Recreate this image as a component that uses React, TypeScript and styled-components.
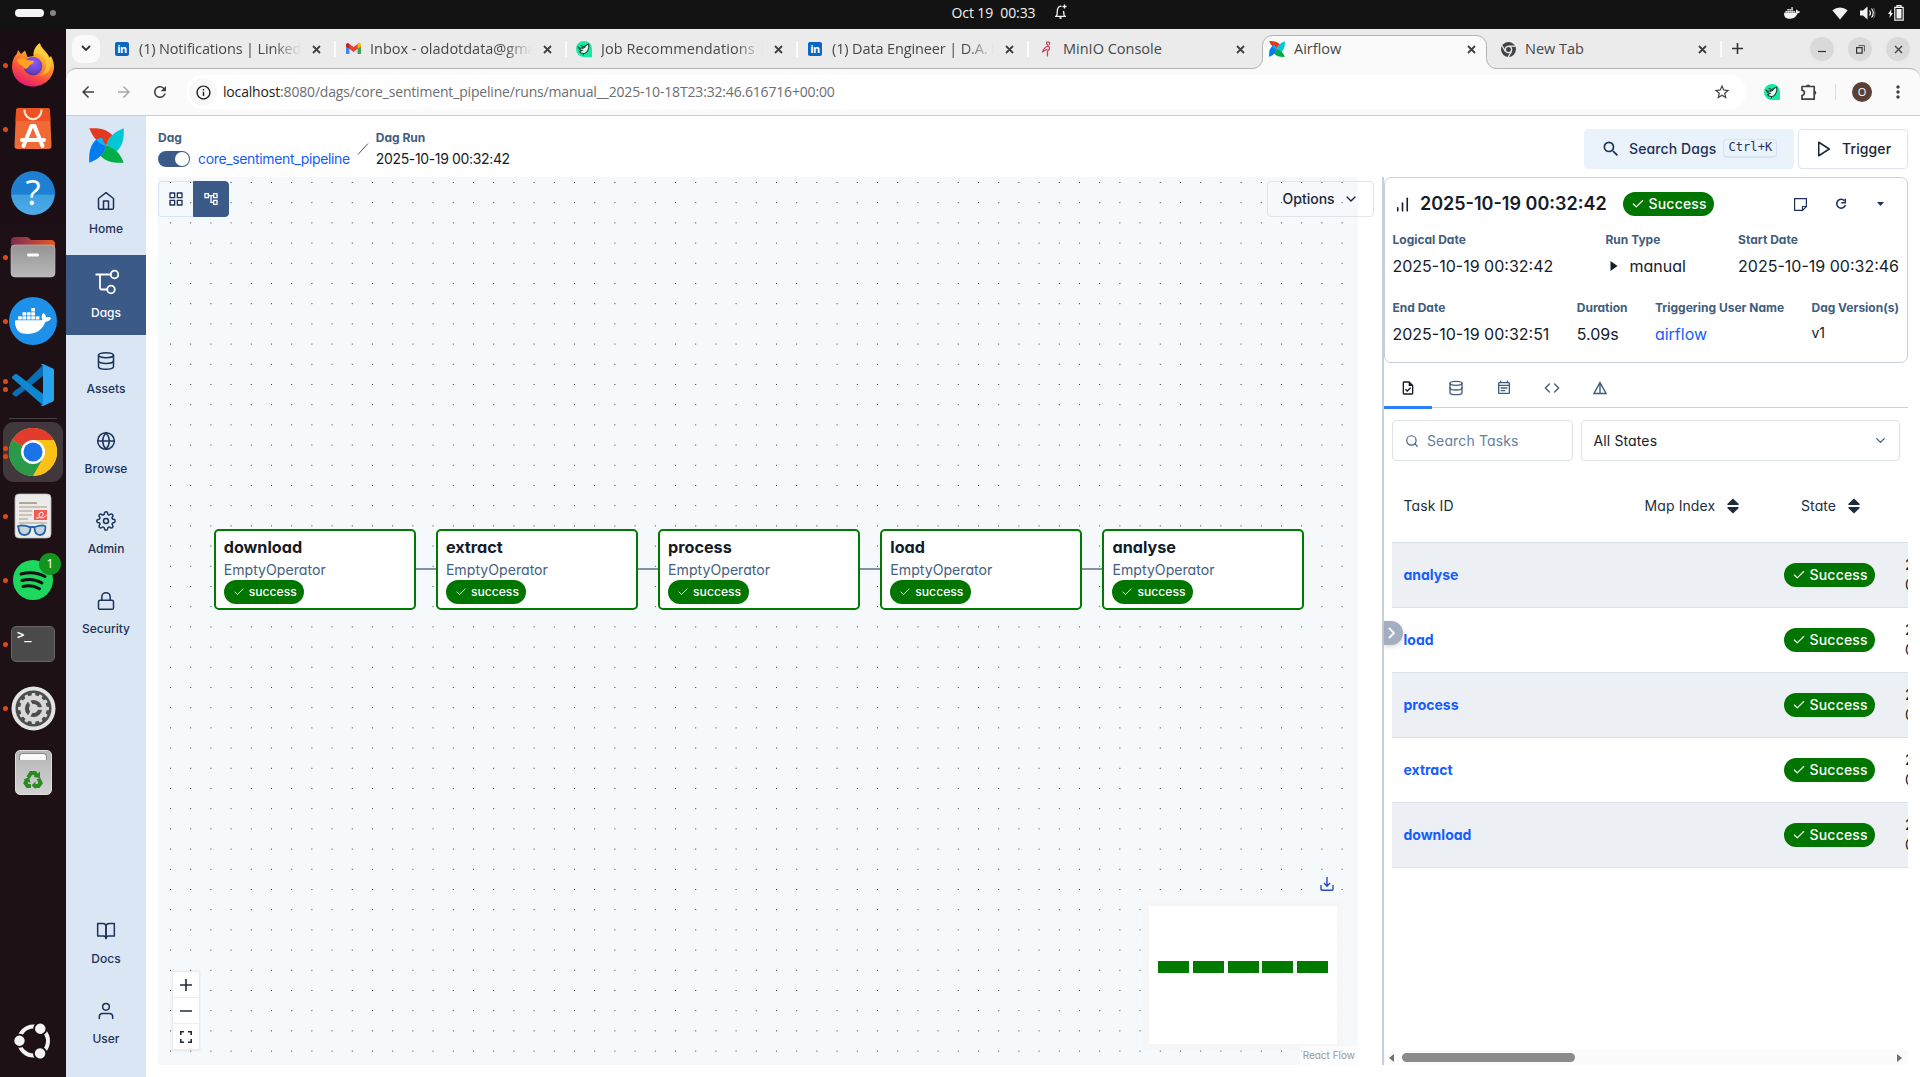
import React from "react";
import styled, { createGlobalStyle, css } from "styled-components";
import {
  FiHome, FiDatabase, FiGlobe, FiSettings, FiLock, FiBookOpen, FiUser, FiGrid, FiChevronDown,
  FiPlay, FiCheck, FiSearch, FiCode, FiBarChart,
} from "react-icons/fi";
import {
  MdOutlineAccountTree, MdSearch, MdOutlineTask, MdOutlineEventNote, MdRefresh, MdStarOutline,
  MdInfoOutline, MdArrowBack, MdArrowForward, MdMoreVert,
} from "react-icons/md";
import { SiDocker } from "react-icons/si";

const INTER = `Inter, "Liberation Sans", sans-serif`;
const SYSTEM = `"Open Sans", "Noto Sans", sans-serif`;

const Global = createGlobalStyle`
  html, body { margin: 0; padding: 0; }
  body { background: #fff; overflow: hidden; }
  * { box-sizing: border-box; }
  svg { display: block; flex: none; }
`;

/* ---------- desktop frame ---------- */

const Desktop = styled.div`
  width: 1920px;
  height: 1077px;
  display: flex;
  flex-direction: column;
  font-family: ${INTER};
  font-feature-settings: "cv11";
  color: #151b28;
  overflow: hidden;
`;

const TopBar = styled.header`
  height: 29px;
  flex: none;
  background: #131313;
  display: grid;
  grid-template-columns: 1fr auto 1fr;
  padding: 0 16px 0 15px;
  font-family: ${SYSTEM};
  font-size: 14px;
  color: #f2f2f2;
`;
const Workspaces = styled.div`
  display: flex;
  align-items: center;
  gap: 6px;
  padding-bottom: 3px;
`;
const WorkspacePill = styled.span<{ $active?: boolean }>`
  width: ${(p) => (p.$active ? 29 : 6)}px;
  height: ${(p) => (p.$active ? 8 : 6)}px;
  border-radius: 4px;
  background: ${(p) => (p.$active ? "#f4f4f4" : "#858585")};
`;
const Clock = styled.div`
  display: flex;
  align-items: center;
  gap: 19px;
  padding: 0 0 5px 100px;
  white-space: pre;
  letter-spacing: -0.1px;
`;
const StatusArea = styled.div`
  display: flex;
  justify-content: flex-end;
  align-items: center;
  gap: 12px;
  padding: 0 0 3px;
`;
const TrayGap = styled.span`
  width: 8px;
`;

const Body = styled.div`
  flex: 1;
  display: flex;
  min-height: 0;
`;

/* ---------- dock ---------- */

const Dock = styled.nav`
  width: 66px;
  flex: none;
  display: flex;
  flex-direction: column;
  padding: 4px 0 4px;
  background: linear-gradient(197deg, transparent 0 25.6%, #1d1116 25.8% 100%),
    linear-gradient(#180e13, #27151e 76%);
`;
const DockItem = styled.div`
  height: 64px;
  flex: none;
  padding-left: 3px;
  display: flex;
  align-items: center;
  position: relative;
`;
const DockTile = styled.div<{ $active?: boolean }>`
  width: 60px;
  height: 60px;
  border-radius: 11px;
  display: grid;
  place-items: center;
  background: ${(p) => (p.$active ? "#41383e" : "transparent")};
`;
const Dots = styled.div`
  position: absolute;
  left: 3px;
  top: 0;
  height: 100%;
  display: flex;
  flex-direction: column;
  justify-content: center;
  gap: 3px;
`;
const Dot = styled.i`
  width: 5px;
  height: 5px;
  border-radius: 50%;
  background: #dc4a17;
`;
const DockRule = styled.hr`
  width: 48px;
  height: 1px;
  margin: 1px auto;
  border: 0;
  background: #4c4347;
`;
const DockSpacer = styled.div`
  flex: 1;
`;

const FirefoxIcon = () => (
  <svg width="44" height="46" viewBox="0 0 44 46">
    <defs>
      <linearGradient id="ffa" x1=".8" y1="0" x2=".3" y2="1">
        <stop offset="0" stopColor="#fff44f" /><stop offset=".35" stopColor="#ffa92e" />
        <stop offset=".65" stopColor="#ff5a34" /><stop offset="1" stopColor="#e3167b" />
      </linearGradient>
      <radialGradient id="ffb" cx=".55" cy=".3" r=".8">
        <stop offset="0" stopColor="#9059ff" /><stop offset=".6" stopColor="#6b45c9" /><stop offset="1" stopColor="#4a2a8c" />
      </radialGradient>
    </defs>
    <path d="M22 44.500C10 44.500 1 35.500 1 24.500 1 19 3 14.500 6 11.500L7 8l3 4 4-3.500 2.500 6.500 6-1C22 8 25 3.500 29 1c.5 5 4 7 7 10.500 1 1 1.500 3 2 4.500l2-2c2 4 3 7 3 10.500 0 11-9.500 20-21 20z" fill="url(#ffa)" />
    <circle cx="22" cy="24" r="9.300" fill="url(#ffb)" />
    <path d="M6 18c4-2 7-2 10 0l7 1c0 3-4 3.500-5 5-1 3-5 4-6 0-2-1-5-2-6-6z" fill="#ffa21f" />
    <path d="M23 12c5-2 11 1 12 7 1 7-2 12-7 15 9-1 13-8 12-15C39 13 33 9 29 2c-4 3-6 6-6 10z" fill="#ffd23c" opacity=".65" />
  </svg>
);
const SoftwareIcon = () => (
  <svg width="38" height="44" viewBox="0 0 38 44">
    <path d="M5 1h28q3 0 3 3l1.500 35q0 3-3 3h-31q-3 0-3-3L2 4q0-3 3-3z" fill="#f06a35" />
    <path d="M5 1h28q3 0 3 3l.4 10H1.600L2 4q0-3 3-3z" fill="#ee5222" />
    <path d="M10.500 2.500c0 13 17 13 17 0" fill="none" stroke="#fbe6dc" strokeWidth="2" />
    <path d="M9.500 39L17.500 19h3l8 20M8 33h22" fill="none" stroke="#fff" strokeWidth="4" strokeLinecap="round" strokeLinejoin="round" />
  </svg>
);
const HelpDisc = styled.div`
  width: 44px;
  height: 44px;
  border-radius: 50%;
  display: grid;
  place-items: center;
  background: linear-gradient(#1d80d3 0 53%, #3f9fdf 54%, #4faceb);
  color: #fff;
  font: 400 35px/40px ${SYSTEM};
  padding-bottom: 2px;
`;
const FilesIcon = () => (
  <svg width="46" height="42" viewBox="0 0 46 42">
    <defs>
      <linearGradient id="fla"><stop stopColor="#7d2b53" /><stop offset="1" stopColor="#e65a24" /></linearGradient>
      <linearGradient id="flb" x2="0" y2="1"><stop stopColor="#949494" /><stop offset="1" stopColor="#b9b9b9" /></linearGradient>
    </defs>
    <path d="M1 14V5q0-4 4-4h11q2 0 3 1l2 2h20q4 0 4 4v8z" fill="url(#fla)" />
    <rect x="1" y="9" width="44" height="32" rx="4" fill="url(#flb)" stroke="#c5c5c5" strokeWidth=".6" />
    <rect x="17" y="17.500" width="12" height="3" rx="1.500" fill="#fff" />
  </svg>
);
const RoundBadge = styled.div`
  width: 48px;
  height: 48px;
  border-radius: 50%;
  display: grid;
  place-items: center;
  color: #fff;
  background: #1d90ea;
`;
const VsCodeIcon = () => (
  <svg width="42" height="42" viewBox="0 0 42 42">
    <path d="M31 1L9 22.500 3.500 26Q1 28 0 30l2.500 2q1.500 1 3 0L31 12z" fill="#0a6fb5" />
    <path d="M5.500 10.500q-1.500-1-3 0L.5 12.300q-1 1 0 2.200L31 41.500V30z" fill="#0f86d0" />
    <path d="M31 0l10 4.500q1 .5 1 2v29q0 1.500-1 2L31 42q-1.500.5-2.500-1 2.500 1 2.500-2V3q0-3-2.500-2 1-1.500 2.500-1z" fill="#28a4ef" />
  </svg>
);
const ChromeIcon = () => (
  <svg width="48" height="48" viewBox="0 0 48 48">
    <circle cx="24" cy="24" r="24" fill="#fbc116" />
    <path d="M24 24L3.200 12A24 24 0 0 1 44.800 12z" fill="#e33b2e" />
    <path d="M24 24L3.200 12A24 24 0 0 0 24 48l10.400-18z" fill="#2b9a48" />
    <path d="M24 12h20.800A24 24 0 0 1 24 48l10.400-18z" fill="#fbc116" />
    <circle cx="24" cy="24" r="12" fill="#fff" />
    <circle cx="24" cy="24" r="9.500" fill="#1a73e8" />
  </svg>
);
const DocViewerIcon = () => (
  <svg width="38" height="46" viewBox="0 0 38 46">
    <rect x="1" y="1" width="36" height="44" rx="4" fill="#ecebe9" stroke="#bbb8b5" strokeWidth=".8" />
    <path d="M5 10h18" stroke="#b3a998" strokeWidth="2" />
    <path d="M5 14h28M5 18h13M5 22h13M5 26h9M5 30h28" stroke="#c9c2b6" strokeWidth="2" />
    <rect x="20" y="17" width="13" height="10" fill="#f45b50" />
    <path d="M22 25c6 0 8-3 7-5s-5 0-4 3 5 2 8-1" fill="none" stroke="#fff" strokeWidth="1" />
    <path d="M3 33.500l4-1q6 0 8 1.500h6q3-1.500 8-1.500l3 1M4.500 34c0 6 2 8 6 8s6-3 6-7.500M20.500 34.500c0 5 2 7.500 5.500 7.500s5.500-3 5.500-8.500" fill="rgba(150,175,200,.4)" stroke="#2566a8" strokeWidth="1.800" />
  </svg>
);
const SpotifyIcon = () => (
  <svg width="40" height="40" viewBox="0 0 40 40">
    <circle cx="20" cy="20" r="20" fill="#1ed75f" />
    <path d="M8 14c9-2.500 17-1.500 24 2.500M9 20.500c7-2 14-1 20 2.500M10 26.500c6-1.500 11-1 16.500 2.300" stroke="#111" fill="none" strokeWidth="3" strokeLinecap="round" />
  </svg>
);
const CountBadge = styled.span`
  position: absolute;
  left: 39px;
  top: 5px;
  width: 22px;
  height: 22px;
  border-radius: 50%;
  background: #15931f;
  color: #fff;
  font: 13px/21px ${SYSTEM};
  text-align: center;
`;
const TerminalTile = styled.div`
  width: 44px;
  height: 36px;
  border-radius: 5px;
  border: 1px solid #666;
  background: #4a4a4a;
  color: #fff;
  font: bold 12px/14px "DejaVu Sans Mono", monospace;
  padding: 1px 5px;
`;
const SettingsIcon = () => (
  <svg width="45" height="45" viewBox="-22.500 -22.500 45 45">
    <circle r="22" fill="#e3e3e3" />
    <circle r="18" fill="#4c4c4c" />
    <circle r="13.200" fill="#d8d8d8" />
    {Array.from({ length: 12 }, (_, i) => (
      <rect key={i} x="-1.800" y="-15.500" width="3.600" height="5" rx="1" fill="#d8d8d8" transform={`rotate(${i * 30})`} />
    ))}
    <circle r="8.600" fill="#4c4c4c" />
    {[0, 120, 240].map((a) => (
      <rect key={a} x="0" y="-1.300" width="10" height="2.600" fill="#d8d8d8" transform={`rotate(${a})`} />
    ))}
    <circle r="4.500" fill="#d8d8d8" />
  </svg>
);
const TrashTile = styled.div`
  width: 37px;
  height: 45px;
  border-radius: 5px;
  border: 1px solid #ddd;
  background: linear-gradient(#b5b5b5, #d2d2d2);
  color: #2c8a22;
  display: flex;
  flex-direction: column;
  align-items: center;
`;
const TrashPaper = styled.div`
  width: 28px;
  height: 7px;
  margin: 2px 0 10px;
  border-radius: 4px 4px 0 0;
  background: #fafafa;
  border: 1px solid #8b8b8b;
  border-bottom: 0;
`;
const RecycleMark = () => (
  <svg width="20" height="19" viewBox="0 0 20 19">
    <g fill="none" stroke="#2c8a22" strokeWidth="4">
      <path d="M5.200 7.500L8 3h4l1.500 2.500" /><path d="M15.500 8.500L17.600 13 15.500 16H11.500" /><path d="M8 16H4.500L2.500 13 4 10" />
    </g>
    <path d="M10.500 7l6.500 1V1.500zM12.500 11.500v7.500L8.500 15.500zM.5 9.500L6 7l1.500 6z" fill="#2c8a22" />
  </svg>
);
const UbuntuIcon = () => (
  <svg width="38" height="38" viewBox="-19.500 -19 38 38">
    <circle r="14.500" fill="none" stroke="#f3f3f3" strokeWidth="4" />
    {[-61, 62, 181].map((a) => (
      <g key={a} transform={`rotate(${a})`}>
        <circle cx="14" r="7" fill="#1d1116" />
        <circle cx="14" r="5.200" fill="#f3f3f3" />
      </g>
    ))}
  </svg>
);

/* ---------- browser chrome ---------- */

const Browser = styled.div`
  flex: 1;
  min-width: 0;
  display: flex;
  flex-direction: column;
  background: #ebebeb;
`;
const TabStrip = styled.div`
  height: 39px;
  flex: none;
  display: flex;
  align-items: center;
  padding: 0 10px 0 6px;
  font-family: ${SYSTEM};
  font-size: 14.5px;
  color: #45474a;
`;
const TabMenu = styled.button`
  width: 28px;
  height: 28px;
  margin-right: 4px;
  border: 0;
  padding: 0;
  border-radius: 9px;
  background: #fafafa;
  display: grid;
  place-items: center;
`;
const Tab = styled.div<{ $divider?: boolean }>`
  width: 231px;
  height: 39px;
  flex: none;
  position: relative;
  display: flex;
  align-items: center;
  padding: 1px 14px 0 10px;
  ${(p) => p.$divider && css`
    &::after {
      content: "";
      position: absolute;
      right: -1px;
      top: 12px;
      width: 2px;
      height: 16px;
      background: #fafafa;
    }
  `}
`;
const TabOutline = styled.svg`
  position: absolute;
  left: -7px;
  top: 6px;
  z-index: 1;
`;
const TabFace = styled.div`
  width: 16px;
  height: 16px;
  z-index: 2;
  display: grid;
  place-items: center;
`;
const TabTitle = styled.span<{ $faded?: boolean; $spacing?: number }>`
  z-index: 2;
  margin-left: 9px;
  width: 162px;
  line-height: 20px;
  white-space: nowrap;
  overflow: hidden;
  letter-spacing: ${(p) => p.$spacing ?? 0}px;
  ${(p) => p.$faded && css`
    mask-image: linear-gradient(90deg, #000 83%, transparent 100%);
  `}
`;
const TabClose = styled.span`
  z-index: 2;
  margin-left: 10.5px;
`;
const LinkedInTile = styled.span`
  width: 14px;
  height: 14px;
  border-radius: 2px;
  background: #0a66c2;
  color: #fff;
  font: bold 11px/13px ${SYSTEM};
  text-align: center;
  letter-spacing: -0.5px;
`;
const NewTab = styled.div`
  margin-left: 11px;
`;
const WindowButtons = styled.div`
  margin-left: auto;
  display: flex;
  gap: 14px;
  padding: 1px 0 0;
`;
const WindowButton = styled.button`
  width: 24px;
  height: 24px;
  border: 0;
  padding: 0;
  border-radius: 50%;
  background: #d9d9d9;
  display: grid;
  place-items: center;
`;
const Toolbar = styled.div`
  height: 48px;
  flex: none;
  border: 1px solid #b2b2b2;
  border-width: 1px 0 1px;
  border-bottom-color: #cdcdcd;
  border-radius: 10px 10px 0 0;
  background: #fafafa;
  display: flex;
  align-items: center;
  padding: 0 12px 0 13px;
  color: #3e4043;
`;
const NavGlyph = styled.span<{ $dim?: boolean }>`
  width: 36px;
  display: flex;
  color: ${(p) => (p.$dim ? "#a8a8a8" : "#3e4043")};
`;
const Omnibox = styled.div`
  width: 1560px;
  height: 34px;
  margin-left: -1px;
  border-radius: 17px;
  background: #fff;
  display: flex;
  align-items: center;
  padding: 0 15px 0 3px;
  font-family: ${SYSTEM};
  font-size: 14px;
  color: #6b6e72;
`;
const SiteInfo = styled.span`
  width: 28px;
  height: 28px;
  border-radius: 50%;
  background: #f8f8f8;
  color: #202124;
  display: grid;
  place-items: center;
`;
const Url = styled.span`
  margin-left: 6px;
  padding-bottom: 1px;
  flex: 1;
  white-space: nowrap;
  letter-spacing: -0.175px;
`;
const Host = styled.span`
  color: #1c1d20;
`;
const Extensions = styled.div`
  margin-left: auto;
  display: flex;
  align-items: center;
  gap: 20px;
`;
const ToolbarRule = styled.i`
  width: 1px;
  height: 16px;
  margin: 0 16px 0 17px;
  background: #dedede;
`;
const Avatar = styled.span`
  width: 20px;
  height: 20px;
  margin-right: 16px;
  border-radius: 50%;
  background: #5b4037;
  color: #fff;
  font: 11px/20px ${SYSTEM};
  text-align: center;
`;

const CrossIcon = ({ size = 9, width = 1.8 }: { size?: number; width?: number }) => (
  <svg width={size} height={size} viewBox="0 0 9 9"><path d="M1 1l7 7M8 1L1 8" stroke="#3e4043" strokeWidth={width} /></svg>
);
const GmailIcon = () => (
  <svg width="15" height="12" viewBox="0 0 15 12">
    <path d="M0 2v9h3.400V5z" fill="#4285f4" /><path d="M15 2v9h-3.400V5z" fill="#34a853" />
    <path d="M0 1.500Q1.500-.5 3.400 1L7.500 4 11.600 1Q13.500-.5 15 1.500v1.800L7.500 9 0 3.300z" fill="#ea4335" />
    <path d="M15 1.500V3.300L11.600 5.800V1Q14-.5 15 1.500z" fill="#fbbc04" /><path d="M0 1.500V3.300l3.400 2.500V1Q1-.5 0 1.500z" fill="#c5221f" />
  </svg>
);
const JobsIcon = () => (
  <svg width="16" height="16" viewBox="0 0 16 16">
    <path d="M8 0a8 8 0 0 1 8 8v8H8A8 8 0 0 1 8 0z" fill="#14eba0" />
    <path d="M2.500 6.500c2 1.500 4 .5 5.500-1L12.500 3q1 3-.5 6-1.500 3.500-4.500 3.500-3 0-4-2L6 9.500Q3.500 9 2.500 6.500z" fill="#eafff7" stroke="#243b37" strokeWidth="1.100" />
    <path d="M6 8l4-2.500M8 12.500l-1 2M4.500 4.500L7 5" stroke="#243b37" strokeWidth="1" />
  </svg>
);
const PuzzleIcon = () => (
  <svg width="18" height="18" viewBox="0 0 18 18">
    <path d="M2 3.500h12.200v12.700H2v-3.700q2.400-.5 2.400-2.700T2 7.200z" fill="none" stroke="#3e4043" strokeWidth="1.700" strokeLinejoin="round" />
    <path d="M6 3.500a2.100 2.100 0 0 1 4.200 0zM14.200 7.700a2.100 2.100 0 0 1 0 4.200z" fill="#3e4043" />
  </svg>
);
const MinioIcon = () => (
  <svg width="9" height="16" viewBox="0 0 9 16">
    <path d="M5.500 15.500V10c2.500-1 2.500-4 .5-5.500S4 .8 6 .8s2 2 1 3M6 5C3 6 1.500 8 .8 10.500L5.500 8" fill="none" stroke="#c9415a" strokeWidth="1.300" />
  </svg>
);
const ChromeMono = () => (
  <svg width="15" height="15" viewBox="0 0 24 24">
    <circle cx="12" cy="12" r="12" fill="#424548" />
    <circle cx="12" cy="12" r="5" fill="none" stroke="#ebebeb" strokeWidth="2" />
    <path d="M12 6.500h11M7 15L1.800 6M16.800 15L11.500 24" stroke="#ebebeb" strokeWidth="2" />
  </svg>
);
/* Four identical blades, each with a lighter fold next to the hub. */
const BLADES = [
  { dark: "#e43921", light: "#ff7557", angle: 0 },
  { dark: "#00c7d4", light: "#11e1ee", angle: 90 },
  { dark: "#00ad46", light: "#04d659", angle: 180 },
  { dark: "#017cee", light: "#0cb6ff", angle: 270 },
];
const Pinwheel = ({ size }: { size: number }) => (
  <svg width={size} height={size} viewBox="0 0 36 36">
    {BLADES.map((b) => (
      <g key={b.angle} transform={`rotate(${b.angle} 18 18)`}>
        <path d="M18 18C9 15.500 4 10 .3.300 10-.2 19 1 24.500 8 21 10.500 19 13.500 18 18z" fill={b.dark} />
        <path d="M18 18c.5-4.500 2.500-8 6-10.500 1.800 2.500 2 4.200 1.600 6C22.500 14.500 20 15.500 18 18z" fill={b.light} />
      </g>
    ))}
  </svg>
);

/* ---------- Airflow shell ---------- */

const Page = styled.div`
  flex: 1;
  min-height: 0;
  display: flex;
  background: #fff;
`;
const SideNav = styled.nav`
  width: 80px;
  flex: none;
  background: #dae6f4;
  display: flex;
  flex-direction: column;
  padding-bottom: 12px;
`;
const LogoSlot = styled.div`
  height: 59px;
  padding: 12px 0 0 23px;
`;
const NavButton = styled.a<{ $active?: boolean; $push?: boolean }>`
  height: 80px;
  ${(p) => p.$push && "margin-top: auto;"}
  display: flex;
  flex-direction: column;
  align-items: center;
  justify-content: center;
  gap: 10px;
  padding-bottom: ${(p) => (p.$active ? 1 : 3)}px;
  font-size: 12px;
  line-height: 16px;
  font-weight: 500;
  background: ${(p) => (p.$active ? "#3c5a88" : "transparent")};
  color: ${(p) => (p.$active ? "#fff" : "#1c325a")};
`;
const Content = styled.main`
  flex: 1;
  min-width: 0;
  display: flex;
  flex-direction: column;
  padding: 13px 12px 12px;
`;
const PageHeader = styled.div`
  height: 48px;
  flex: none;
  display: flex;
  align-items: flex-start;
`;
const Crumb = styled.div`
  display: flex;
  flex-direction: column;
  font-size: 14px;
  line-height: 20px;
  letter-spacing: -0.35px;
  padding-top: 1px;
`;
const Label = styled.span`
  font-size: 12px;
  line-height: 16px;
  font-weight: 700;
  letter-spacing: 0;
  color: #3f5d7f;
  white-space: nowrap;
`;
const CrumbValue = styled.div`
  display: flex;
  align-items: center;
  gap: 8px;
  padding-top: 3px;
`;
const Switch = styled.span`
  width: 32px;
  height: 16px;
  border-radius: 8px;
  background: #3c5a88;
  display: flex;
  justify-content: flex-end;
  padding: 1px;
`;
const Knob = styled.i`
  width: 14px;
  height: 14px;
  border-radius: 50%;
  background: #fff;
`;
const Link = styled.a<{ $bold?: boolean }>`
  color: #155dfc;
  font-weight: ${(p) => (p.$bold ? 700 : 400)};
`;
const HeaderActions = styled.div`
  margin-left: auto;
  display: flex;
  gap: 4px;
`;
const HeaderButton = styled.button<{ $tint?: boolean }>`
  height: 40px;
  width: ${(p) => (p.$tint ? 210 : 110)}px;
  border: 1px solid ${(p) => (p.$tint ? "#eaf2fb" : "#dfe4ea")};
  border-radius: 4px;
  background: ${(p) => (p.$tint ? "#eaf2fb" : "#fff")};
  color: ${(p) => (p.$tint ? "#1c325a" : "#1b2637")};
  font: 500 14px/20px ${INTER};
  font-feature-settings: "cv11";
  letter-spacing: 0.1px;
  display: flex;
  align-items: center;
  padding: 0 0 0 16px;
  gap: ${(p) => (p.$tint ? 8 : 9)}px;
`;
const Kbd = styled.kbd`
  margin: -1px 0 0 -1px;
  height: 19px;
  padding: 0 4px;
  border: 1px solid #d5e2f1;
  border-bottom-width: 2px;
  border-radius: 4px;
  font: 12px/14px "DejaVu Sans Mono", monospace;
`;
const Split = styled.div`
  flex: 1;
  min-height: 0;
  display: flex;
`;

/* ---------- graph ---------- */

const Canvas = styled.section`
  width: 1200px;
  flex: none;
  margin-right: 24px;
  position: relative;
  background: #f5f9fc;
`;
const ViewToggle = styled.div`
  position: absolute;
  left: 0;
  top: 4px;
  display: flex;
`;
const ViewButton = styled.button<{ $active?: boolean }>`
  width: ${(p) => (p.$active ? 36 : 35)}px;
  height: 36px;
  padding: 0;
  border: 1px solid ${(p) => (p.$active ? "#3c5a88" : "#d6e4f5")};
  ${(p) => !p.$active && "border-right: 0;"}
  border-radius: ${(p) => (p.$active ? "0 4px 4px 0" : "4px 0 0 4px")};
  background: ${(p) => (p.$active ? "#3c5a88" : "transparent")};
  color: ${(p) => (p.$active ? "#fff" : "#1c325a")};
  display: grid;
  place-items: center;
`;
const OptionsButton = styled.button`
  position: absolute;
  left: 1109px;
  top: 4px;
  width: 107px;
  height: 36px;
  border: 1px solid #dfe4ea;
  border-radius: 4px;
  background: transparent;
  color: #1b2637;
  font: 500 14px/20px ${INTER};
  font-feature-settings: "cv11";
  display: flex;
  align-items: center;
  gap: 8.5px;
  padding: 0 0 0 14.5px;
`;
const TaskNode = styled.article`
  position: absolute;
  top: 352px;
  width: 202px;
  height: 80.8px;
  border: 2px solid #007a00;
  border-radius: 5px;
  background: #fff;
  padding: 4px 8px 0 8.2px;
  display: flex;
  flex-direction: column;
  align-items: flex-start;
`;
const TaskName = styled.b`
  font-size: 16.2px;
  line-height: 24px;
  font-weight: 700;
`;
const TaskKind = styled.span`
  font-size: 14.14px;
  line-height: 21px;
  color: #45617f;
`;
const Edge = styled.i`
  position: absolute;
  top: 391px;
  width: 21px;
  height: 2px;
  background: #8590a3;
`;
const Badge = styled.span<{ $small?: boolean }>`
  display: inline-flex;
  flex: none;
  align-items: center;
  height: 24px;
  border-radius: 12px;
  background: #007500;
  color: #fff;
  font-weight: 500;
  white-space: nowrap;
  ${(p) => p.$small
    ? css`font-size: 12.15px; padding: 0 9px 1px; gap: 4px; width: 80.5px;`
    : css`font-size: 14px; line-height: 20px; padding: 0 8px; gap: 4px; width: 91px; letter-spacing: 0.2px;`}
`;
const Controls = styled.div`
  position: absolute;
  left: 15px;
  bottom: 15px;
  width: 26px;
  box-shadow: 0 0 2px 1px rgba(0, 0, 0, 0.08);
  display: flex;
  flex-direction: column;
`;
const ControlButton = styled.button`
  width: 26px;
  height: 26px;
  border: 0;
  border-bottom: 1px solid #eee;
  background: #fefefe;
  padding: 0;
  display: grid;
  place-items: center;
`;
const DownloadButton = styled.button`
  position: absolute;
  right: 24px;
  bottom: 174px;
  border: 0;
  padding: 0;
  background: transparent;
`;
const MiniMap = styled.div`
  position: absolute;
  right: 15px;
  bottom: 15px;
  width: 200px;
  height: 150px;
  background: #fff;
  border: 6px solid #f6f6f6;
  display: flex;
  align-items: center;
  justify-content: center;
  gap: 3.8px;
  padding: 0 0 16px;
`;
const MiniNode = styled.i`
  width: 31px;
  height: 12px;
  background: #007a00;
`;
const Attribution = styled.a`
  position: absolute;
  right: 0;
  bottom: 0;
  height: 19px;
  padding: 2px 3px;
  font-size: 10px;
  line-height: 15px;
  background: rgba(255, 255, 255, 0.5);
  color: #999;
`;

/* ---------- details ---------- */

const Details = styled.section`
  flex: 1;
  min-width: 0;
  border-left: 2px solid #c7d0dc;
  display: flex;
  flex-direction: column;
  position: relative;
`;
const RunCard = styled.div`
  height: 186px;
  flex: none;
  border: 1px solid #c7d0dc;
  border-radius: 7px;
  padding: 14px 8px 0 7.5px;
`;
const RunTitleRow = styled.div`
  display: flex;
  align-items: center;
  height: 24px;
  padding-left: 0.5px;
`;
const RunTitle = styled.h2`
  margin: 0 16.5px 0 8px;
  font-size: 18px;
  line-height: 24px;
  font-weight: 600;
  white-space: nowrap;
  width: 186px;
`;
const RunActions = styled.div`
  margin: 0 -1.5px 0 auto;
  display: flex;
  align-items: center;
  color: #1c325a;
`;
const RunAction = styled.span`
  width: 40px;
  display: grid;
  place-items: center;
`;
const StatRow = styled.dl<{ $offset: number }>`
  margin: ${(p) => p.$offset}px 0 0;
  display: flex;
  justify-content: space-between;
`;
const Stat = styled.div`
  display: flex;
  flex-direction: column;
  gap: 6px;
`;
const StatValue = styled.dd<{ $small?: boolean }>`
  margin: 0;
  font-size: ${(p) => (p.$small ? 14 : 16)}px;
  line-height: ${(p) => (p.$small ? 22 : 24)}px;
  display: flex;
  align-items: center;
  white-space: nowrap;
`;
const TabList = styled.div`
  height: 45px;
  flex: none;
  display: flex;
  border-bottom: 1px solid #c7d0dc;
  color: #3f5d7f;
`;
const PanelTab = styled.span<{ $active?: boolean }>`
  width: 48px;
  height: 46px;
  display: grid;
  place-items: center;
  padding-top: 4px;
  ${(p) => p.$active && css`
    color: #151b28;
    border-bottom: 3px solid #2b7fff;
    padding-top: 7px;
  `}
`;
const Filters = styled.div`
  display: flex;
  gap: 8px;
  padding: 12px 8px 0;
  flex: none;
`;
const Field = styled.div<{ $width: number }>`
  width: ${(p) => p.$width}px;
  height: 41px;
  border: 1px solid #dfe4ea;
  border-radius: 4px;
  display: flex;
  align-items: center;
  font-size: 14px;
  letter-spacing: 0.13px;
  padding: 0 11.5px;
`;
const Placeholder = styled.span`
  margin-left: 8.5px;
  color: #64809d;
`;
const Grow = styled.span`
  flex: 1;
`;
const Table = styled.div`
  margin-left: 8px;
  overflow: hidden;
  font-size: 14px;
  line-height: 20px;
  flex: 1;
  padding-top: 9px;
`;
const HeadRow = styled.div`
  width: 660px;
  height: 72px;
  padding-bottom: 1px;
  display: grid;
  grid-template-columns: 241px 140px 121px 158px;
  align-items: center;
  color: #222e40;
  letter-spacing: 0.1px;
`;
const Row = styled.div<{ $odd?: boolean }>`
  width: 660px;
  height: 65px;
  display: grid;
  grid-template-columns: 241px 139px 121px 159px;
  align-items: center;
  border-top: 1px solid #dbe1e9;
  background: ${(p) => (p.$odd ? "#ecf0f5" : "#fff")};
  &:last-child {
    height: 66px;
    border-bottom: 1px solid #dbe1e9;
  }
`;
const Cell = styled.div<{ $indent?: number }>`
  padding-left: ${(p) => p.$indent ?? 11.5}px;
  display: flex;
  align-items: center;
  gap: 12px;
`;
const DateCell = styled.div`
  padding-left: 12px;
  width: 110px;
`;
const ScrollTrack = styled.div`
  height: 15px;
  flex: none;
  background: #fbfbfb;
  display: flex;
  align-items: center;
  padding: 0 6px 0 5px;
`;
const ScrollThumb = styled.i`
  width: 173px;
  height: 9px;
  margin: 0 auto 0 8px;
  border-radius: 5px;
  background: #8b8b8b;
`;
const CollapseButton = styled.button`
  position: absolute;
  left: 0;
  top: 444px;
  width: 19px;
  height: 24px;
  border: 0;
  padding: 0 5px 0 0;
  border-radius: 0 12px 12px 0;
  background: #a3aec0;
  box-shadow: 0 2px 4px rgba(0, 0, 0, 0.15);
  display: grid;
  place-items: center;
`;

const SortIcon = () => (
  <svg width="12" height="16" viewBox="0 0 12 16" fill="#1e2b3c">
    <path d="M6 .4l5.500 5.400q.6 1.200-.8 1.200H1.300Q-.1 7 .5 5.800zM6 15.600l5.500-5.400q.6-1.200-.8-1.200H1.300Q-.1 9 .5 10.200z" />
  </svg>
);
const DagIcon = () => (
  <svg width="26" height="26" viewBox="0 0 26 26" fill="none" stroke="currentColor" strokeWidth="1.800">
    <path d="M2.500 5.500h16M7 5.500v13q0 2 2 2h6" />
    <circle cx="21.500" cy="5.500" r="3.800" /><circle cx="18" cy="20.500" r="3.800" />
  </svg>
);
const DetailsTriangle = () => (
  <svg width="14" height="14" viewBox="0 0 14 14" fill="none" stroke="currentColor" strokeWidth="1.400">
    <path d="M7 1.500L13 12.500H1zM7 2v10.500" />
  </svg>
);
const NoteIcon = () => (
  <svg width="13" height="13" viewBox="0 0 13 13" fill="none" stroke="currentColor" strokeWidth="1.200">
    <path d="M.6.600h11.800V8.500L8.500 12.400H.6z" />
    <path d="M12.400 8.500H8.500v3.900" />
  </svg>
);
const ReloadIcon = () => (
  <svg width="12" height="12" viewBox="0 0 12 12" fill="none" stroke="currentColor" strokeWidth="1.500">
    <path d="M9.400 2.700A4.400 4.400 0 1 0 10.400 7" />
    <path d="M10.300.8v4H6.300" />
  </svg>
);

const NAV = [
  { label: "Home", icon: <FiHome size={20} strokeWidth={1.8} /> },
  { label: "Dags", icon: <DagIcon />, active: true },
  { label: "Assets", icon: <FiDatabase size={20} strokeWidth={1.8} /> },
  { label: "Browse", icon: <FiGlobe size={20} strokeWidth={1.8} /> },
  { label: "Admin", icon: <FiSettings size={20} strokeWidth={1.8} /> },
  { label: "Security", icon: <FiLock size={20} strokeWidth={1.8} /> },
  { label: "Docs", icon: <FiBookOpen size={20} strokeWidth={1.8} />, push: true },
  { label: "User", icon: <FiUser size={20} strokeWidth={1.8} /> },
];
const TASKS = ["download", "extract", "process", "load", "analyse"];
const TABS = [
  { title: "(1) Notifications | LinkedIn", icon: <LinkedInTile>in</LinkedInTile>, faded: true, spacing: -0.15, divider: true },
  { title: "Inbox - oladotdata@gmail.com", icon: <GmailIcon />, faded: true, spacing: -0.02, divider: true },
  { title: "Job Recommendations | Jobs", icon: <JobsIcon />, faded: true, spacing: 0.08, divider: true },
  { title: "(1) Data Engineer | D.A. Data", icon: <LinkedInTile>in</LinkedInTile>, faded: true, spacing: -0.13, divider: true },
  { title: "MinIO Console", icon: <MinioIcon /> },
  { title: "Airflow", icon: <Pinwheel size={16} />, active: true },
  { title: "New Tab", icon: <ChromeMono />, divider: true },
];
const DOCK: { icon: React.ReactNode; dots: number; active?: boolean; count?: string; rule?: boolean }[] = [
  { icon: <FirefoxIcon />, dots: 1 },
  { icon: <SoftwareIcon />, dots: 1 },
  { icon: <HelpDisc>?</HelpDisc>, dots: 0 },
  { icon: <FilesIcon />, dots: 1 },
  { icon: <RoundBadge><SiDocker size={36} /></RoundBadge>, dots: 1 },
  { icon: <VsCodeIcon />, dots: 2, rule: true },
  { icon: <ChromeIcon />, dots: 2, active: true },
  { icon: <DocViewerIcon />, dots: 1 },
  { icon: <SpotifyIcon />, dots: 1, count: "1" },
  { icon: <TerminalTile>&gt;_</TerminalTile>, dots: 1 },
  { icon: <SettingsIcon />, dots: 1 },
  { icon: <TrashTile><TrashPaper /><RecycleMark /></TrashTile>, dots: 0 },
];

function SystemBar() {
  return (
    <TopBar>
      <Workspaces><WorkspacePill $active /><WorkspacePill /></Workspaces>
      <Clock>
        {"Oct 19  00:33"}
        <svg width="13" height="16" viewBox="0 0 13 16" fill="none" stroke="#f2f2f2" strokeWidth="1.300">
          <path d="M1 12.300h11M2.500 12c1-1.500.5-4 1-6.500C4 3 5.500 2.200 7.500 2.200M10.500 12c-1-1.500-.5-3-1-5" />
          <path d="M5.500 14h2" strokeWidth="1.800" /><path d="M8.500 2.500h4M10.500.5v4" />
        </svg>
      </Clock>
      <StatusArea>
        <SiDocker size={16} />
        <TrayGap />
        <svg width="16" height="13" viewBox="0 0 16 13"><path d="M8 12.500L.3 3.300Q8-2.500 15.700 3.300z" fill="#f2f2f2" /></svg>
        <svg width="16" height="14" viewBox="0 0 16 14" fill="none" stroke="#f2f2f2" strokeWidth="1.200">
          <path d="M0 4.500h3L7.500.5v13L3 9.500H0z" fill="#f2f2f2" stroke="none" />
          <path d="M9.500 4.500q2 2.500 0 5M11.500 2.500q3.500 4.500 0 9" /><path d="M13.500 2q3 5 0 10" opacity=".35" />
        </svg>
        <svg width="16" height="16" viewBox="0 0 16 16">
          <path d="M3.500 4L0 9h2l-.5 4L5 8H3z" fill="#f2f2f2" />
          <path d="M6.800 2.300h8.400v12.900H6.800zM9 2V.600h4V2" fill="none" stroke="#f2f2f2" strokeWidth="1.200" />
          <path d="M8.500 4h5v9.500h-5z" fill="#f2f2f2" />
        </svg>
      </StatusArea>
    </TopBar>
  );
}

function BrowserChrome() {
  return (
    <>
      <TabStrip>
        <TabMenu><svg width="10" height="7" viewBox="0 0 10 7"><path d="M1 1l4 4 4-4" fill="none" stroke="#333" strokeWidth="1.900" /></svg></TabMenu>
        {TABS.map((t) => (
          <Tab key={t.title} $divider={t.divider}>
            {t.active && (
              <TabOutline width="245" height="35" viewBox="0 0 245 35">
                <path d="M.5 33.500a10 10 0 0 0 10-10V10.500a10 10 0 0 1 10-10H224.500a10 10 0 0 1 10 10V23.500a10 10 0 0 0 10 10V35H.5z" fill="#fafafa" />
                <path d="M.5 33.500a10 10 0 0 0 10-10V10.500a10 10 0 0 1 10-10H224.500a10 10 0 0 1 10 10V23.500a10 10 0 0 0 10 10" fill="none" stroke="#b2b2b2" />
              </TabOutline>
            )}
            <TabFace>{t.icon}</TabFace>
            <TabTitle $faded={t.faded} $spacing={t.spacing}>{t.title}</TabTitle>
            <TabClose><CrossIcon /></TabClose>
          </Tab>
        ))}
        <NewTab><svg width="11" height="11" viewBox="0 0 11 11"><path d="M5.500 0v11M0 5.500h11" stroke="#333" strokeWidth="1.600" /></svg></NewTab>
        <WindowButtons>
          <WindowButton><svg width="8" height="8" viewBox="0 0 8 8"><path d="M0 6.500h8" stroke="#333" strokeWidth="1.200" /></svg></WindowButton>
          <WindowButton><svg width="9" height="9" viewBox="0 0 9 9" fill="none" stroke="#333" strokeWidth="1.200"><path d="M.6 2.600h5.500v5.500H.6z" /><path d="M2.500.6h5.900v5.900" strokeWidth=".8" /></svg></WindowButton>
          <WindowButton><CrossIcon size={9} width={1.4} /></WindowButton>
        </WindowButtons>
      </TabStrip>
      <Toolbar>
        <NavGlyph><MdArrowBack size={18} /></NavGlyph>
        <NavGlyph $dim><MdArrowForward size={18} /></NavGlyph>
        <NavGlyph><MdRefresh size={18} /></NavGlyph>
        <Omnibox>
          <SiteInfo><MdInfoOutline size={17} /></SiteInfo>
          <Url><Host>localhost</Host>:8080/dags/core_sentiment_pipeline/runs/manual__2025-10-18T23:32:46.616716+00:00</Url>
          <MdStarOutline size={18} color="#3e4043" />
        </Omnibox>
        <Extensions>
          <JobsIcon />
          <PuzzleIcon />
        </Extensions>
        <ToolbarRule />
        <Avatar>O</Avatar>
        <MdMoreVert size={20} />
      </Toolbar>
    </>
  );
}

function Graph() {
  return (
    <Canvas>
      <svg width="1200" height="888">
        <defs>
          <pattern id="dots" x="12" y="5" width="20.200" height="20.200" patternUnits="userSpaceOnUse">
            <circle cx=".505" cy=".505" r=".55" fill="#1d2533" />
          </pattern>
        </defs>
        <rect width="1200" height="888" fill="url(#dots)" />
      </svg>
      {TASKS.slice(1).map((t, i) => <Edge key={t} style={{ left: 257.5 + i * 222.2 }} />)}
      {TASKS.map((t, i) => (
        <TaskNode key={t} style={{ left: 55.5 + i * 222.2 }}>
          <TaskName>{t}</TaskName>
          <TaskKind>EmptyOperator</TaskKind>
          <Badge $small><FiCheck size={12} />success</Badge>
        </TaskNode>
      ))}
      <ViewToggle>
        <ViewButton><FiGrid size={16} /></ViewButton>
        <ViewButton $active><MdOutlineAccountTree size={16} /></ViewButton>
      </ViewToggle>
      <OptionsButton>Options<FiChevronDown size={16} /></OptionsButton>
      <Controls>
        <ControlButton><svg width="12" height="12" viewBox="0 0 12 12"><path d="M6 0v12M0 6h12" stroke="#222b38" strokeWidth="1.600" /></svg></ControlButton>
        <ControlButton><svg width="12" height="2" viewBox="0 0 12 2"><path d="M0 1h12" stroke="#222b38" strokeWidth="1.500" /></svg></ControlButton>
        <ControlButton><svg width="12" height="12" viewBox="0 0 12 12"><path d="M.8 4V.8H4M8 .8h3.200V4M11.200 8v3.200H8M4 11.200H.8V8" fill="none" stroke="#222b38" strokeWidth="1.600" /></svg></ControlButton>
      </Controls>
      <DownloadButton>
        <svg width="14" height="14" viewBox="0 0 14 14" fill="none" stroke="#2a4ec2" strokeWidth="1.400">
          <path d="M7 0v9M4 6l3 3.200L10 6M1 8v4.300q0 .9.9.9h10.200q.9 0 .9-.9V8" />
        </svg>
      </DownloadButton>
      <MiniMap>{TASKS.map((t) => <MiniNode key={t} />)}</MiniMap>
      <Attribution>React Flow</Attribution>
    </Canvas>
  );
}

function RunDetails() {
  return (
    <Details>
      <RunCard>
        <RunTitleRow>
          <FiBarChart size={19} />
          <RunTitle>2025-10-19 00:32:42</RunTitle>
          <Badge><FiCheck size={14} />Success</Badge>
          <RunActions>
            <RunAction><NoteIcon /></RunAction>
            <RunAction><ReloadIcon /></RunAction>
            <RunAction><svg width="7" height="4" viewBox="0 0 7 4"><path d="M0 0h7L3.500 4z" fill="#1c325a" /></svg></RunAction>
          </RunActions>
        </RunTitleRow>
        <StatRow $offset={16}>
          <Stat><Label>Logical Date</Label><StatValue>2025-10-19 00:32:42</StatValue></Stat>
          <Stat>
            <Label>Run Type</Label>
            <StatValue><svg width="24" height="10" viewBox="0 0 24 10"><path d="M5.500 0l7 5-7 5z" fill="#151b28" /></svg>manual</StatValue>
          </Stat>
          <Stat><Label>Start Date</Label><StatValue>2025-10-19 00:32:46</StatValue></Stat>
        </StatRow>
        <StatRow $offset={22}>
          <Stat><Label>End Date</Label><StatValue>2025-10-19 00:32:51</StatValue></Stat>
          <Stat><Label>Duration</Label><StatValue>5.09s</StatValue></Stat>
          <Stat><Label>Triggering User Name</Label><StatValue><Link>airflow</Link></StatValue></Stat>
          <Stat><Label>Dag Version(s)</Label><StatValue $small>v1</StatValue></Stat>
        </StatRow>
      </RunCard>
      <TabList>
        <PanelTab $active><MdOutlineTask size={16} /></PanelTab>
        <PanelTab><FiDatabase size={16} /></PanelTab>
        <PanelTab><MdOutlineEventNote size={16} /></PanelTab>
        <PanelTab><FiCode size={16} /></PanelTab>
        <PanelTab><DetailsTriangle /></PanelTab>
      </TabList>
      <Filters>
        <Field $width={181}><FiSearch size={14} color="#3f5d7f" /><Placeholder>Search Tasks</Placeholder></Field>
        <Field $width={319}>All States<Grow /><FiChevronDown size={15} color="#3f5d7f" /></Field>
      </Filters>
      <Table>
        <HeadRow>
          <Cell>Task ID</Cell><Cell>Map Index <SortIcon /></Cell><Cell $indent={28}>State <SortIcon /></Cell>
        </HeadRow>
        {[...TASKS].reverse().map((t, i) => (
          <Row key={t} $odd={i % 2 === 0}>
            <Cell><Link $bold>{t}</Link></Cell><Cell />
            <Cell><Badge><FiCheck size={14} />Success</Badge></Cell>
            <DateCell>2025-10-19 00:32:46</DateCell>
          </Row>
        ))}
      </Table>
      <ScrollTrack>
        <svg width="5" height="8" viewBox="0 0 5 8"><path d="M5 0v8L0 4z" fill="#707070" /></svg>
        <ScrollThumb />
        <svg width="5" height="8" viewBox="0 0 5 8"><path d="M0 0v8l5-4z" fill="#707070" /></svg>
      </ScrollTrack>
      <CollapseButton><svg width="7" height="12" viewBox="0 0 7 12"><path d="M1 1l5 5-5 5" fill="none" stroke="#fff" strokeWidth="1.800" /></svg></CollapseButton>
    </Details>
  );
}

export default function App() {
  return (
    <Desktop>
      <Global />
      <SystemBar />
      <Body>
        <Dock>
          {DOCK.map((d, i) => (
            <React.Fragment key={i}>
              <DockItem>
                <DockTile $active={d.active}>{d.icon}</DockTile>
                <Dots>{Array.from({ length: d.dots }, (_, n) => <Dot key={n} />)}</Dots>
                {d.count && <CountBadge>{d.count}</CountBadge>}
              </DockItem>
              {d.rule && <DockRule />}
            </React.Fragment>
          ))}
          <DockSpacer />
          <DockItem><DockTile><UbuntuIcon /></DockTile></DockItem>
        </Dock>
        <Browser>
          <BrowserChrome />
          <Page>
            <SideNav>
              <LogoSlot><Pinwheel size={35} /></LogoSlot>
              {NAV.map((n) => (
                <NavButton key={n.label} $active={n.active} $push={n.push}>{n.icon}{n.label}</NavButton>
              ))}
            </SideNav>
            <Content>
              <PageHeader>
                <Crumb>
                  <Label>Dag</Label>
                  <CrumbValue><Switch><Knob /></Switch><Link>core_sentiment_pipeline</Link></CrumbValue>
                </Crumb>
                <svg width="26" height="30" viewBox="0 0 26 30"><path d="M8 25.500L18 14.500" stroke="#3f5d7f" strokeWidth="1" /></svg>
                <Crumb>
                  <Label>Dag Run</Label>
                  <CrumbValue>2025-10-19 00:32:42</CrumbValue>
                </Crumb>
                <HeaderActions>
                  <HeaderButton $tint><MdSearch size={20} />Search Dags<Kbd>Ctrl+K</Kbd></HeaderButton>
                  <HeaderButton><FiPlay size={18} />Trigger</HeaderButton>
                </HeaderActions>
              </PageHeader>
              <Split>
                <Graph />
                <RunDetails />
              </Split>
            </Content>
          </Page>
        </Browser>
      </Body>
    </Desktop>
  );
}
